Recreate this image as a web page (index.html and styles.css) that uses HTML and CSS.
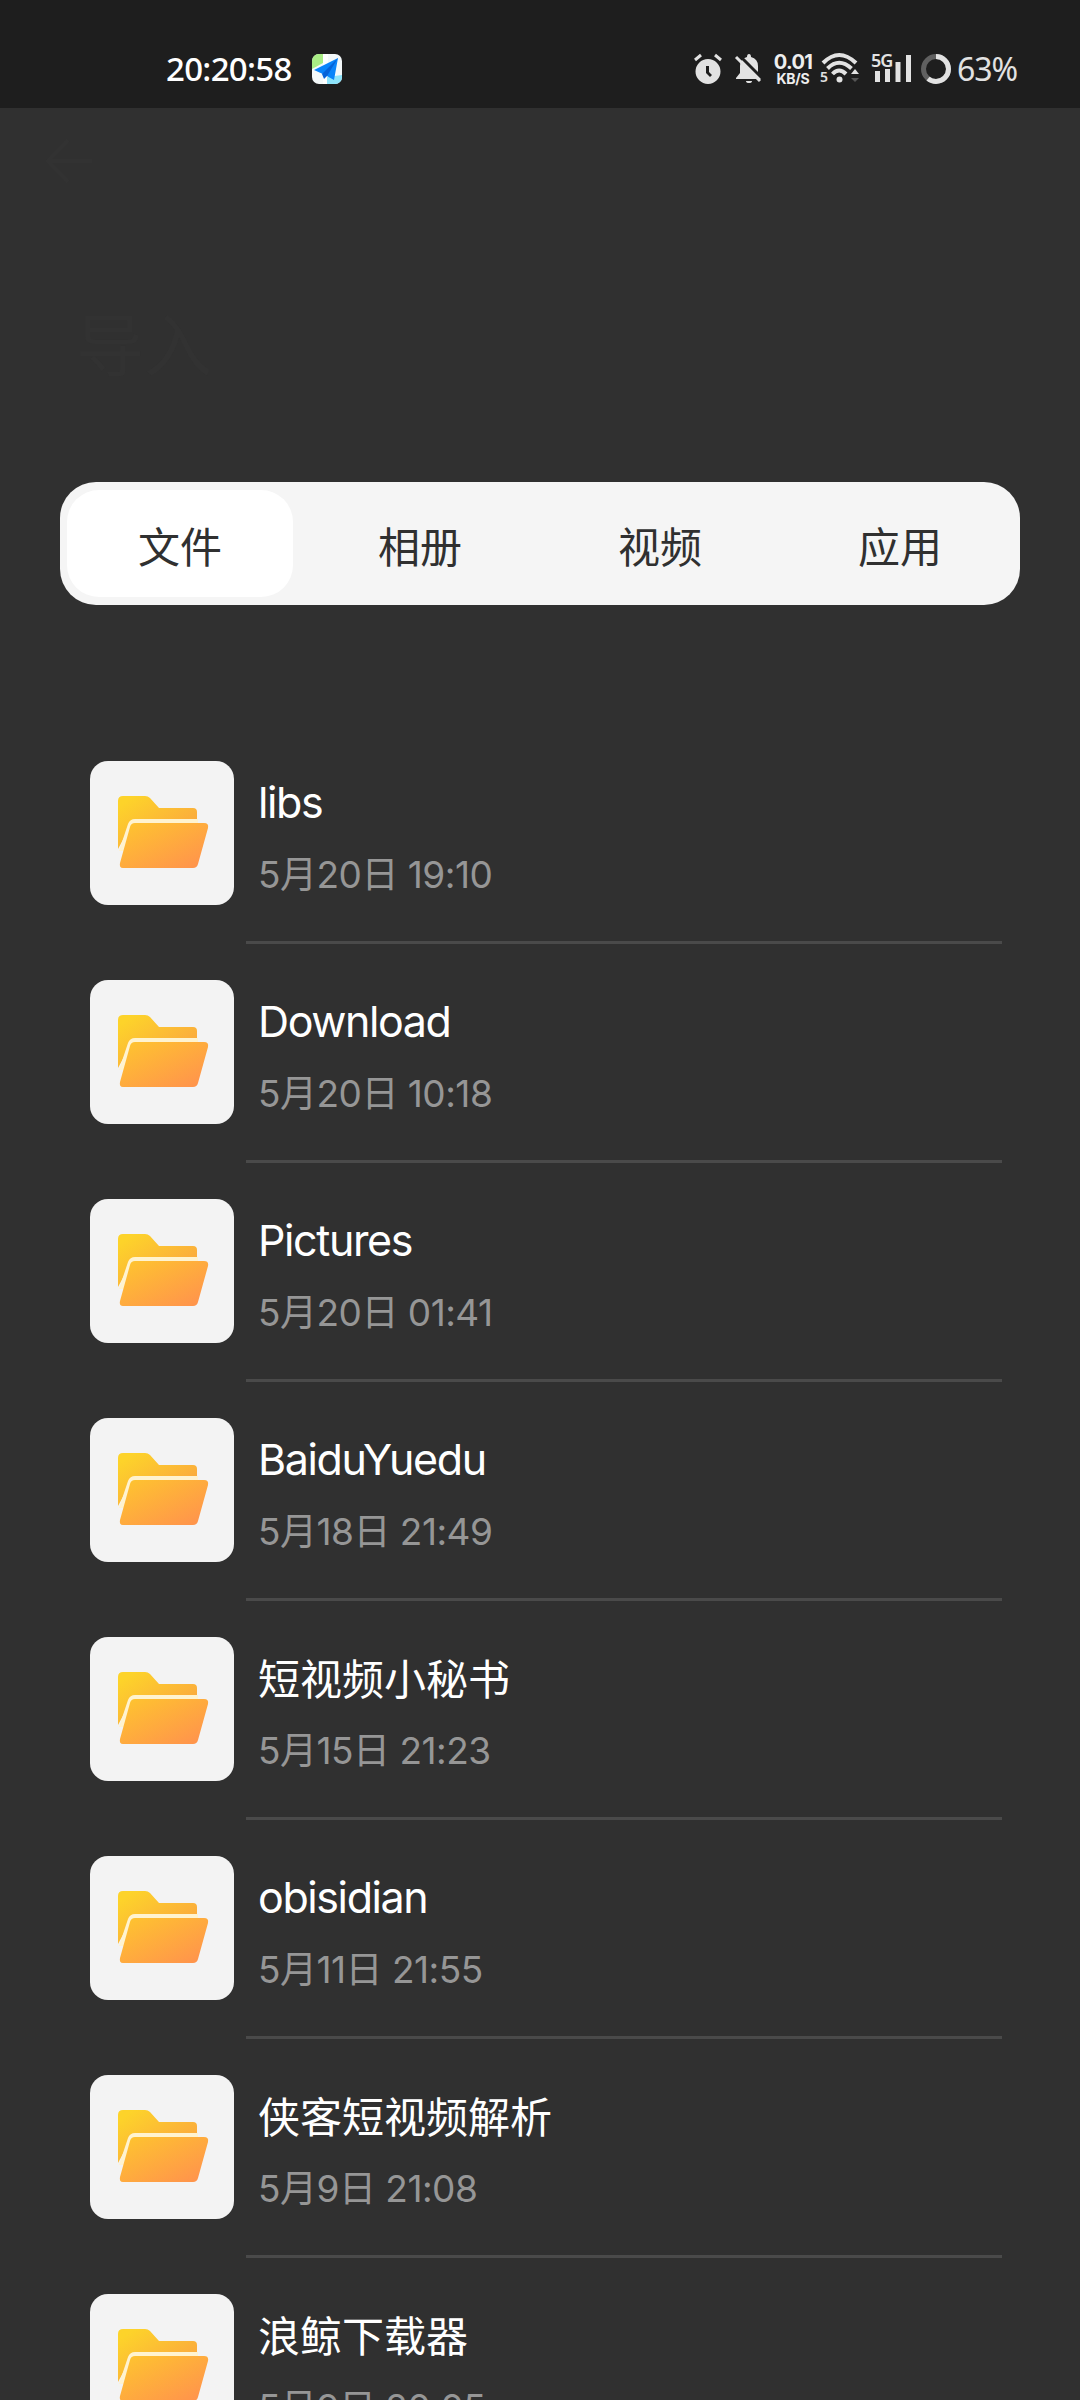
FILE: index.html
```
<!DOCTYPE html>
<html lang="zh-CN">
<head>
<meta charset="utf-8">
<title>文件</title>
<link rel="stylesheet" href="styles.css">
</head>
<body>
<svg class="defs" width="0" height="0" aria-hidden="true">
  <defs>
    <linearGradient id="back" x1="0" y1="0" x2="1" y2="1"><stop offset=".1" stop-color="#fdd32a"/><stop offset="1" stop-color="#fa9a45"/></linearGradient>
    <linearGradient id="front" x1="0" y1="0" x2="1" y2="1"><stop offset="0" stop-color="#fec62e"/><stop offset=".9" stop-color="#ff954b"/></linearGradient>
    <symbol id="folder" viewBox="0 0 144 144">
      <path fill="url(#back)" d="M28 88V40Q28 35 33 35H55Q58 35 60 37L69 47H103Q107 47 107 51V62H42Z"/>
      <path fill="#fff3cf" d="M29 90L38 63Q40 58 45 58H108V64L60 90Z"/>
      <path fill="url(#front)" d="M45 62H114Q119 62 118 67L108 103Q107 107 103 107H33Q29 107 30 102L40 66Q41 62 45 62Z"/>
    </symbol>
  </defs>
</svg>
<header class="status">
  <div class="status-left">
    <span class="clock">20:20:58</span>
    <svg class="app-icon" viewBox="0 0 30 30">
      <clipPath id="app"><rect width="30" height="30" rx="7"/></clipPath>
      <g clip-path="url(#app)">
        <path fill="#f4f9fa" d="M0 0H30V30H0Z"/><path fill="#a9ed85" d="M0 0H11V9L0 15Z"/><path fill="#fff" d="M11 0H16V30H11Z"/><path fill="#8de4fb" d="M15 30V23L30 21V30Z"/>
        <path fill="#0a84fa" d="M2 16L26 4L22 26L13 21Z"/><path fill="#0562d8" d="M26 4L10 20L12 25L15 22Z"/>
      </g>
    </svg>
  </div>
  <div class="status-right">
    <svg class="alarm" viewBox="0 0 28 32" fill="#e2e2e2">
      <path fill-rule="evenodd" d="M14 6A12.500 12.500 0 1 0 14 31A12.500 12.500 0 0 0 14 6ZM12 13H15V19L18 22L16 24L12 20Z"/>
      <path d="M7 2L1 7M21 2L27 7" stroke="#e2e2e2" stroke-width="3"/>
    </svg>
    <svg class="bell" viewBox="0 0 28 32" fill="#e2e2e2">
      <path d="M12 4Q12 1 14 1Q16 1 16 4Q23 6 23 13V20L27 25V26H1V25L5 20V13Q5 6 12 4ZM11 28H17Q17 30 14 30Q11 30 11 28Z"/>
      <path d="M4 2L29 27" stroke="#1e1e1e" stroke-width="3"/><path d="M1 4L25 28" stroke="#e2e2e2" stroke-width="3"/>
    </svg>
    <div class="speed"><span class="speed-value">0.01</span><span class="speed-unit">KB/S</span></div>
    <svg class="wifi" viewBox="0 0 40 32" fill="none" stroke="#e2e2e2" stroke-width="4">
      <path d="M3 10Q19 -6 36 10M7.500 15.500Q19 4 31.500 15.500M12.500 21Q19 14 26 21"/>
      <circle cx="19.500" cy="26.500" r="3" fill="#e2e2e2" stroke="none"/>
      <path d="M31 21L35 16L39 21Z" fill="#e2e2e2" stroke="none"/><path d="M31 25L35 29L39 25Z" fill="#555" stroke="none"/>
      <text class="wifi-gen" x="0" y="29">5</text>
    </svg>
    <svg class="signal" viewBox="0 0 40 32" fill="#e2e2e2">
      <path d="M4 18H9V29H4ZM14 16H19V29H14ZM24.500 9H29.500V29H24.500ZM35 2H40V29H35Z"/>
      <text class="net-gen" x="0" y="14">5G</text>
    </svg>
    <svg class="battery" viewBox="0 0 30 30" fill="none" stroke-width="5">
      <circle cx="15" cy="15" r="12.500" stroke="#606060"/>
      <circle cx="15" cy="15" r="12.500" stroke="#e2e2e2" pathLength="100" stroke-dasharray="61 39" transform="rotate(-90 15 15)"/>
    </svg>
    <span class="percent">63%</span>
  </div>
</header>
<div class="heading">
  <svg class="back-arrow" viewBox="0 0 50 50" fill="none" stroke="#323232" stroke-width="4"><path d="M48 25H4M24 4L4 25L24 46"/></svg>
  <span class="title">导入</span>
</div>
<main>
  <nav class="tabs">
    <span class="tab active">文件</span><span class="tab">相册</span><span class="tab">视频</span><span class="tab">应用</span>
  </nav>
  <ul class="files">
    <li class="row"><span class="tile"><svg><use href="#folder"/></svg></span><div class="info"><span class="name latin">libs</span><span class="date">5月20日 19:10</span></div></li>
    <li class="row"><span class="tile"><svg><use href="#folder"/></svg></span><div class="info"><span class="name latin">Download</span><span class="date">5月20日 10:18</span></div></li>
    <li class="row"><span class="tile"><svg><use href="#folder"/></svg></span><div class="info"><span class="name latin">Pictures</span><span class="date">5月20日 01:41</span></div></li>
    <li class="row"><span class="tile"><svg><use href="#folder"/></svg></span><div class="info"><span class="name latin">BaiduYuedu</span><span class="date">5月18日 21:49</span></div></li>
    <li class="row"><span class="tile"><svg><use href="#folder"/></svg></span><div class="info"><span class="name">短视频小秘书</span><span class="date">5月15日 21:23</span></div></li>
    <li class="row"><span class="tile"><svg><use href="#folder"/></svg></span><div class="info"><span class="name latin">obisidian</span><span class="date">5月11日 21:55</span></div></li>
    <li class="row"><span class="tile"><svg><use href="#folder"/></svg></span><div class="info"><span class="name">侠客短视频解析</span><span class="date">5月9日 21:08</span></div></li>
    <li class="row"><span class="tile"><svg><use href="#folder"/></svg></span><div class="info"><span class="name">浪鲸下载器</span><span class="date">5月9日 20:05</span></div></li>
  </ul>
</main>
</body>
</html>
```
FILE: styles.css
```
* { box-sizing: border-box; }
html, body { margin: 0; height: 2400px; overflow: hidden; }
body {
  display: flex;
  flex-direction: column;
  background: #303030;
  font-family: Inter, "Noto Sans CJK SC", sans-serif;
}
.defs { position: absolute; }
svg { display: block; flex: none; overflow: visible; }

.status {
  flex: none;
  height: 108px;
  padding: 30px 63px 0 166px;
  display: flex;
  justify-content: space-between;
  background: #1e1e1e;
  font-family: "Noto Sans", sans-serif;
}
.status-left, .status-right { display: flex; align-items: center; height: 78px; }
.clock { color: #fff; font-size: 33px; line-height: 46px; font-weight: 500; width: 146px; letter-spacing: -.7px; }
.app-icon { width: 30px; height: 30px; }
.status-right { color: #e2e2e2; }
.alarm { width: 28px; height: 32px; margin-right: 13px; }
.bell { width: 28px; height: 32px; margin-right: 10px; }
.speed { width: 40px; display: flex; flex-direction: column; align-items: center; font-family: Inter, sans-serif; color: #eee; font-weight: 700; }
.speed-value { font-size: 20px; line-height: 20px; letter-spacing: -.6px; }
.speed-unit { font-size: 14px; line-height: 14px; letter-spacing: -.2px; }
.wifi { width: 40px; height: 32px; margin-left: 7px; }
.wifi-gen { font: 600 14px "Noto Sans", sans-serif; fill: #e2e2e2; stroke: none; }
.signal { width: 40px; height: 32px; margin-left: 11px; }
.net-gen { font: 600 18px "Noto Sans", sans-serif; letter-spacing: -1px; stroke: #1e1e1e; stroke-width: 2px; paint-order: stroke; }
.battery { width: 30px; height: 30px; margin: 0 6px 0 10px; }
.percent { font-size: 32px; line-height: 44px; width: 60px; white-space: nowrap; letter-spacing: -1px; }

.heading { flex: none; height: 374px; padding: 28px 60px 0 44px; }
.back-arrow { width: 50px; height: 50px; }
.title { display: block; margin: 115px 0 0 32px; font-size: 68px; line-height: 90px; color: #323232; }

main { padding: 0 60px; }
.tabs {
  height: 123px;
  padding: 8px 7px;
  display: grid;
  grid-template-columns: repeat(4, 1fr);
  column-gap: 14px;
  border-radius: 36px;
  background: #f5f5f5;
}
.tab {
  display: flex;
  align-items: center;
  justify-content: center;
  padding-top: 8px;
  border-radius: 32px;
  font-size: 42px;
  line-height: 60px;
  color: #303030;
}
.tab.active { background: #fff; }

.files { list-style: none; margin: 119px 0 0; padding: 0 18px 0 30px; }
.row { height: 219px; display: flex; align-items: flex-start; padding-top: 37px; }
.tile { flex: none; width: 144px; height: 144px; border-radius: 18px; background: #f3f3f3; }
.tile svg { width: 144px; height: 144px; }
.info {
  flex: 1;
  height: 183px;
  margin-left: 12px;
  padding: 15px 0 0 12px;
  display: flex;
  flex-direction: column;
  border-bottom: 3px solid #4a4a4a;
}
.name { font-size: 42px; line-height: 56px; color: #fff; white-space: nowrap; }
.name.latin { font-size: 43px; letter-spacing: -1.4px; line-height: 52px; padding-bottom: 4px; }
.date { font-size: 37px; line-height: 52px; margin-top: 17px; color: #969696; white-space: nowrap; letter-spacing: -.5px; }
```
